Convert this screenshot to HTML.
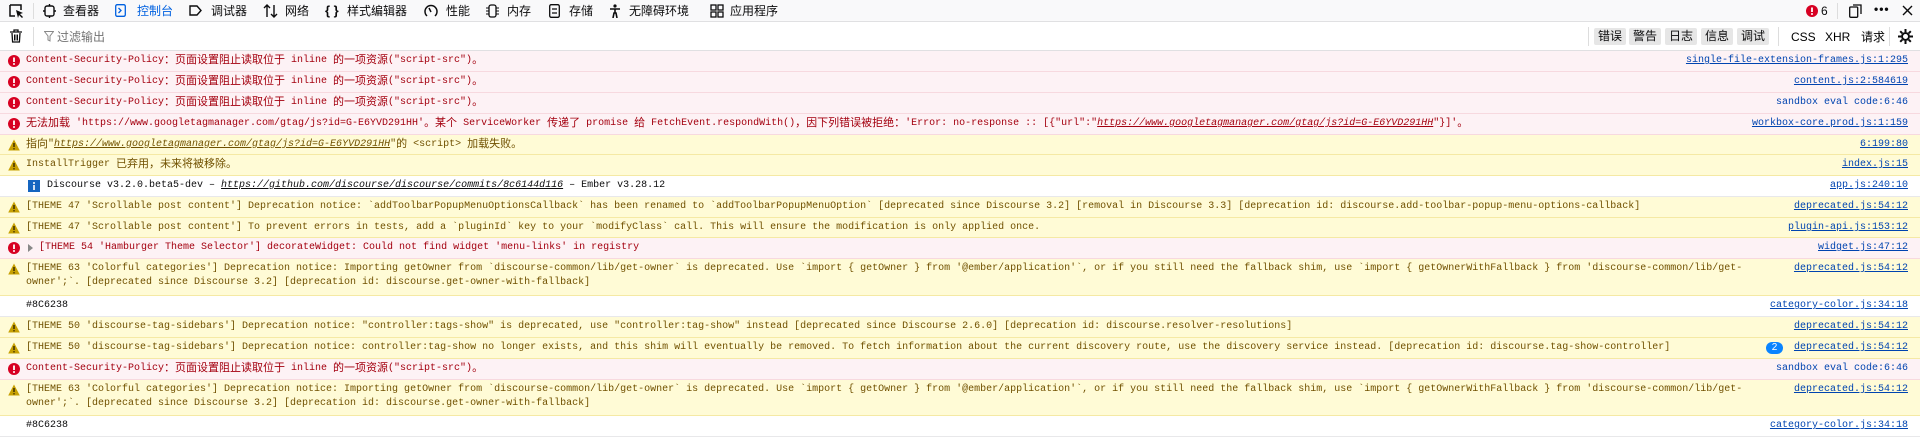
<!DOCTYPE html>
<html><head><meta charset="utf-8"><style>
*{margin:0;padding:0;box-sizing:border-box}
body{width:1920px;height:444px;overflow:hidden;background:#fff;font-family:"Liberation Sans","Noto Sans CJK SC",sans-serif;position:relative}
.tb{position:absolute;left:0;top:0;width:1920px;height:22px;background:#f9f9fa;border-bottom:1px solid #e0e0e2;font-size:12px;color:#0c0c0d}
.tb span{position:absolute;top:3px;line-height:16px}
.tb svg{position:absolute;top:4px}
.fb{position:absolute;left:0;top:22px;width:1920px;height:29px;background:#fff;border-bottom:1px solid #e0e0e2;font-size:12px}
.fb span{line-height:16px}
.btn{position:absolute;top:6px;height:17px;width:32px;background:#e6e6e6;border-radius:2px;text-align:center;line-height:17px;font-size:12px;color:#0c0c0d}
.r{position:absolute;left:0;width:1920px;border-bottom:1px solid;font-family:"Liberation Mono","Noto Sans CJK SC",monospace;font-size:10px;line-height:14px;padding-top:3px;white-space:pre;overflow:hidden}
.e{background:#fdf2f5;border-color:#f7d9df;color:#a4000f}
.w{background:#fffbd6;border-color:#f5e9a4;color:#715100}
.n{background:#fff;border-color:#e8e8ea;color:#0c0c0d}
.t{position:absolute;left:26px;top:3px;height:14px}
.l{position:absolute;right:12px;top:3px;color:#0044b0;text-decoration:underline}
.l.nu{text-decoration:none}
.ic{position:absolute;left:8px;top:4px}
.c{font-size:11px;font-weight:normal;font-family:"Noto Sans CJK SC",sans-serif;line-height:10px;vertical-align:-1px}
u i,i u{font-style:italic}
</style></head><body>
<div class="tb">
<svg style="left:9px" width="15" height="15" viewBox="0 0 15 15"><path d="M1 1h11v5M1 1v11h5" stroke="#0c0c0d" stroke-width="1.5" fill="none"/><path d="M7 6l7 3-3 1 3 3-1 1-3-3-1 3z" fill="#0c0c0d"/></svg>
<div style="position:absolute;left:33px;top:3px;width:1px;height:16px;background:#ddd"></div>
<svg style="left:43px" width="13" height="14" viewBox="0 0 13 14"><rect x="2" y="2" width="9" height="10" rx="2" stroke="#0c0c0d" stroke-width="1.4" fill="none"/><path d="M6.5 0v2M6.5 12v2M0 7h2M11 7h2" stroke="#0c0c0d" stroke-width="1.4"/></svg><span style="left:63px">查看器</span>
<svg style="left:115px" width="11" height="13" viewBox="0 0 11 13"><rect x="0.7" y="0.7" width="9.6" height="11.6" rx="1.5" stroke="#0061e0" stroke-width="1.3" fill="none"/><path d="M3.5 4l2.5 2.5-2.5 2.5" stroke="#0061e0" stroke-width="1.3" fill="none"/></svg><span style="left:137px;color:#0061e0">控制台</span>
<svg style="left:189px" width="13" height="13" viewBox="0 0 13 13"><path d="M1 2h7l4 4.5-4 4.5H1z" stroke="#0c0c0d" stroke-width="1.4" fill="none"/></svg><span style="left:211px">调试器</span>
<svg style="left:263px" width="15" height="14" viewBox="0 0 15 14"><path d="M4 1v12M1 4l3-3 3 3M11 13V1M8 10l3 3 3-3" stroke="#0c0c0d" stroke-width="1.4" fill="none"/></svg><span style="left:285px">网络</span>
<span style="left:325px;font-weight:bold;font-size:13px">{ }</span><span style="left:347px">样式编辑器</span>
<svg style="left:424px" width="14" height="14" viewBox="0 0 14 14"><path d="M3 12A6 6 0 1 1 11 12" stroke="#0c0c0d" stroke-width="1.5" fill="none"/><path d="M7 8L5 4" stroke="#0c0c0d" stroke-width="1.5"/></svg><span style="left:446px">性能</span>
<svg style="left:486px" width="13" height="14" viewBox="0 0 13 14"><rect x="3" y="1" width="7" height="12" rx="2" stroke="#0c0c0d" stroke-width="1.3" fill="none"/><path d="M0 4h3M0 7h3M0 10h3M10 4h3M10 7h3M10 10h3" stroke="#0c0c0d"/></svg><span style="left:507px">内存</span>
<svg style="left:549px" width="11" height="14" viewBox="0 0 11 14"><rect x="0.7" y="0.7" width="9.6" height="12.6" rx="1.5" stroke="#0c0c0d" stroke-width="1.3" fill="none"/><path d="M3 5h5M3 9h5" stroke="#0c0c0d" stroke-width="1.3"/></svg><span style="left:569px">存储</span>
<svg style="left:609px" width="12" height="14" viewBox="0 0 12 14"><circle cx="6" cy="2" r="1.6" fill="#0c0c0d"/><path d="M1 5h10M6 5v4M4 14l1-5h2l1 5" stroke="#0c0c0d" stroke-width="1.6" fill="none"/></svg><span style="left:629px">无障碍环境</span>
<svg style="left:710px" width="14" height="14" viewBox="0 0 14 14"><rect x="1" y="1" width="5" height="5" stroke="#0c0c0d" fill="none" stroke-width="1.3"/><rect x="8" y="1" width="5" height="5" stroke="#0c0c0d" fill="none" stroke-width="1.3"/><rect x="1" y="8" width="5" height="5" stroke="#0c0c0d" fill="none" stroke-width="1.3"/><rect x="8" y="8" width="5" height="5" stroke="#0c0c0d" fill="none" stroke-width="1.3"/></svg><span style="left:730px">应用程序</span>
<svg style="left:1806px;top:5px" width="12" height="12" viewBox="0 0 12 12"><circle cx="6" cy="6" r="6" fill="#d70022"/><path d="M6 2.5v4.5" stroke="#fff" stroke-width="1.8"/><circle cx="6" cy="9" r="1" fill="#fff"/></svg><span style="left:1821px">6</span>
<div style="position:absolute;left:1837px;top:3px;width:1px;height:16px;background:#ddd"></div>
<svg style="left:1849px" width="13" height="14" viewBox="0 0 13 14"><rect x="0.7" y="3" width="8" height="10.3" rx="1" stroke="#0c0c0d" stroke-width="1.3" fill="none"/><path d="M4 1h8v9" stroke="#0c0c0d" stroke-width="1.3" fill="none"/></svg>
<span style="left:1874px;font-weight:bold;letter-spacing:1px;top:1px">•••</span>
<svg style="left:1902px;top:5px" width="11" height="11" viewBox="0 0 11 11"><path d="M1 1l9 9M10 1l-9 9" stroke="#0c0c0d" stroke-width="1.4"/></svg>
</div>
<div class="fb">
<svg style="position:absolute;left:10px;top:7px" width="12" height="14" viewBox="0 0 12 14"><path d="M0 3h12M4 3V1h4v2" stroke="#0c0c0d" stroke-width="1.3" fill="none"/><path d="M2 4l.6 9h6.8L10 4" stroke="#0c0c0d" stroke-width="1.3" fill="none"/><path d="M4.5 5.5v6M6 5.5v6M7.5 5.5v6" stroke="#0c0c0d"/></svg>
<div style="position:absolute;left:33px;top:5px;width:1px;height:19px;background:#ddd"></div>
<svg style="position:absolute;left:44px;top:9px" width="10" height="11" viewBox="0 0 10 11"><path d="M.5 .5h9L6 5v5L4 9V5z" stroke="#888" fill="none"/></svg>
<span style="position:absolute;left:57px;top:7px;color:#737373">过滤输出</span>
<div style="position:absolute;left:1588px;top:5px;width:1px;height:19px;background:#ddd"></div>
<div class="btn" style="left:1594px">错误</div><div class="btn" style="left:1629px">警告</div><div class="btn" style="left:1665px">日志</div><div class="btn" style="left:1701px">信息</div><div class="btn" style="left:1737px">调试</div>
<div style="position:absolute;left:1778px;top:5px;width:1px;height:19px;background:#ddd"></div>
<span style="position:absolute;left:1791px;top:7px">CSS</span><span style="position:absolute;left:1825px;top:7px">XHR</span><span style="position:absolute;left:1861px;top:7px">请求</span>
<div style="position:absolute;left:1889px;top:5px;width:1px;height:19px;background:#ddd"></div>
<svg style="position:absolute;left:1898px;top:7px" width="15" height="15" viewBox="0 0 15 15"><circle cx="7.5" cy="7.5" r="3.5" stroke="#0c0c0d" stroke-width="2" fill="none"/><path d="M7.5 0v3M7.5 12v3M0 7.5h3M12 7.5h3M2.2 2.2l2.1 2.1M10.7 10.7l2.1 2.1M2.2 12.8l2.1-2.1M10.7 4.3l2.1-2.1" stroke="#0c0c0d" stroke-width="2"/></svg>
</div>

<svg width="0" height="0" style="position:absolute"><defs>
<symbol id="er" viewBox="0 0 12 12"><circle cx="6" cy="6" r="6" fill="#d70022"/><path d="M6 2.5v4.5" stroke="#fff" stroke-width="1.8"/><circle cx="6" cy="9" r="1" fill="#fff"/></symbol>
<symbol id="wa" viewBox="0 0 12 12"><path d="M6 .5L11.8 11.5H.2z" fill="#c7a003"/><path d="M6 4v4" stroke="#3d2e00" stroke-width="1.5"/><circle cx="6" cy="9.8" r=".8" fill="#3d2e00"/></symbol>
</defs></svg>

<div class="r e" style="top:51px;height:21px"><svg class="ic" width="12" height="12"><use href="#er"/></svg><span class="t">Content-Security-Policy<b class="c">：页面设置阻止读取位于</b> inline <b class="c">的一项资源</b>("script-src")<b class="c">。</b></span><span class="l">single-file-extension-frames.js:1:295</span></div>
<div class="r e" style="top:72px;height:21px"><svg class="ic" width="12" height="12"><use href="#er"/></svg><span class="t">Content-Security-Policy<b class="c">：页面设置阻止读取位于</b> inline <b class="c">的一项资源</b>("script-src")<b class="c">。</b></span><span class="l">content.js:2:584619</span></div>
<div class="r e" style="top:93px;height:21px"><svg class="ic" width="12" height="12"><use href="#er"/></svg><span class="t">Content-Security-Policy<b class="c">：页面设置阻止读取位于</b> inline <b class="c">的一项资源</b>("script-src")<b class="c">。</b></span><span class="l nu">sandbox eval code:6:46</span></div>
<div class="r e" style="top:114px;height:21px"><svg class="ic" width="12" height="12"><use href="#er"/></svg><span class="t"><b class="c">无法加载</b> 'https://www.googletagmanager.com/gtag/js?id=G-E6YVD291HH'<b class="c">。某个</b> ServiceWorker <b class="c">传递了</b> promise <b class="c">给</b> FetchEvent.respondWith()<b class="c">，因下列错误被拒绝：</b>'Error: no-response :: [{"url":"<u><i>https://www.googletagmanager.com/gtag/js?id=G-E6YVD291HH</i></u>"}]'<b class="c">。</b></span><span class="l">workbox-core.prod.js:1:159</span></div>
<div class="r w" style="top:135px;height:20px"><svg class="ic" width="12" height="12"><use href="#wa"/></svg><span class="t"><b class="c">指向</b>"<u><i>https://www.googletagmanager.com/gtag/js?id=G-E6YVD291HH</i></u>"<b class="c">的</b> &lt;script&gt; <b class="c">加载失败。</b></span><span class="l">6:199:80</span></div>
<div class="r w" style="top:155px;height:21px"><svg class="ic" width="12" height="12"><use href="#wa"/></svg><span class="t">InstallTrigger <b class="c">已弃用，未来将被移除。</b></span><span class="l">index.js:15</span></div>
<div class="r n" style="top:176px;height:21px"><svg style="position:absolute;left:28px;top:4px" width="12" height="12" viewBox="0 0 12 12"><rect width="12" height="12" fill="#1565c0"/><path d="M6 5v5" stroke="#fff" stroke-width="1.6"/><circle cx="6" cy="3" r="1" fill="#fff"/></svg><span class="t" style="left:47px">Discourse v3.2.0.beta5-dev – <u><i>https://github.com/discourse/discourse/commits/8c6144d116</i></u> – Ember v3.28.12</span><span class="l">app.js:240:10</span></div>
<div class="r w" style="top:197px;height:21px"><svg class="ic" width="12" height="12"><use href="#wa"/></svg><span class="t">[THEME 47 'Scrollable post content'] Deprecation notice: `addToolbarPopupMenuOptionsCallback` has been renamed to `addToolbarPopupMenuOption` [deprecated since Discourse 3.2] [removal in Discourse 3.3] [deprecation id: discourse.add-toolbar-popup-menu-options-callback]</span><span class="l">deprecated.js:54:12</span></div>
<div class="r w" style="top:218px;height:20px"><svg class="ic" width="12" height="12"><use href="#wa"/></svg><span class="t">[THEME 47 'Scrollable post content'] To prevent errors in tests, add a `pluginId` key to your `modifyClass` call. This will ensure the modification is only applied once.</span><span class="l">plugin-api.js:153:12</span></div>
<div class="r e" style="top:238px;height:21px"><svg class="ic" width="12" height="12"><use href="#er"/></svg><svg style="position:absolute;left:28px;top:6px" width="6" height="8" viewBox="0 0 6 8"><path d="M0 0l5 4-5 4z" fill="#888"/></svg><span class="t" style="left:39px">[THEME 54 'Hamburger Theme Selector'] decorateWidget: Could not find widget 'menu-links' in registry</span><span class="l">widget.js:47:12</span></div>
<div class="r w" style="top:259px;height:37px"><svg class="ic" width="12" height="12"><use href="#wa"/></svg><span class="t" style="height:30px">[THEME 63 'Colorful categories'] Deprecation notice: Importing getOwner from `discourse-common/lib/get-owner` is deprecated. Use `import { getOwner } from '@ember/application'`, or if you still need the fallback shim, use `import { getOwnerWithFallback } from 'discourse-common/lib/get-
owner';`. [deprecated since Discourse 3.2] [deprecation id: discourse.get-owner-with-fallback]</span><span class="l">deprecated.js:54:12</span></div>
<div class="r n" style="top:296px;height:21px"><span class="t">#8C6238</span><span class="l">category-color.js:34:18</span></div>
<div class="r w" style="top:317px;height:21px"><svg class="ic" width="12" height="12"><use href="#wa"/></svg><span class="t">[THEME 50 'discourse-tag-sidebars'] Deprecation notice: "controller:tags-show" is deprecated, use "controller:tag-show" instead [deprecated since Discourse 2.6.0] [deprecation id: discourse.resolver-resolutions]</span><span class="l">deprecated.js:54:12</span></div>
<div class="r w" style="top:338px;height:21px"><svg class="ic" width="12" height="12"><use href="#wa"/></svg><span class="t">[THEME 50 'discourse-tag-sidebars'] Deprecation notice: controller:tag-show no longer exists, and this shim will eventually be removed. To fetch information about the current discovery route, use the discovery service instead. [deprecation id: discourse.tag-show-controller]</span><span style="position:absolute;left:1766px;top:4px;width:17px;height:12px;border-radius:6px;background:#0a84ff;color:#fff;font-family:'Liberation Sans',sans-serif;font-size:10px;line-height:12px;text-align:center">2</span><span class="l">deprecated.js:54:12</span></div>
<div class="r e" style="top:359px;height:21px"><svg class="ic" width="12" height="12"><use href="#er"/></svg><span class="t">Content-Security-Policy<b class="c">：页面设置阻止读取位于</b> inline <b class="c">的一项资源</b>("script-src")<b class="c">。</b></span><span class="l nu">sandbox eval code:6:46</span></div>
<div class="r w" style="top:380px;height:36px"><svg class="ic" width="12" height="12"><use href="#wa"/></svg><span class="t" style="height:30px">[THEME 63 'Colorful categories'] Deprecation notice: Importing getOwner from `discourse-common/lib/get-owner` is deprecated. Use `import { getOwner } from '@ember/application'`, or if you still need the fallback shim, use `import { getOwnerWithFallback } from 'discourse-common/lib/get-
owner';`. [deprecated since Discourse 3.2] [deprecation id: discourse.get-owner-with-fallback]</span><span class="l">deprecated.js:54:12</span></div>
<div class="r n" style="top:416px;height:21px"><span class="t">#8C6238</span><span class="l">category-color.js:34:18</span></div>
</body></html>
